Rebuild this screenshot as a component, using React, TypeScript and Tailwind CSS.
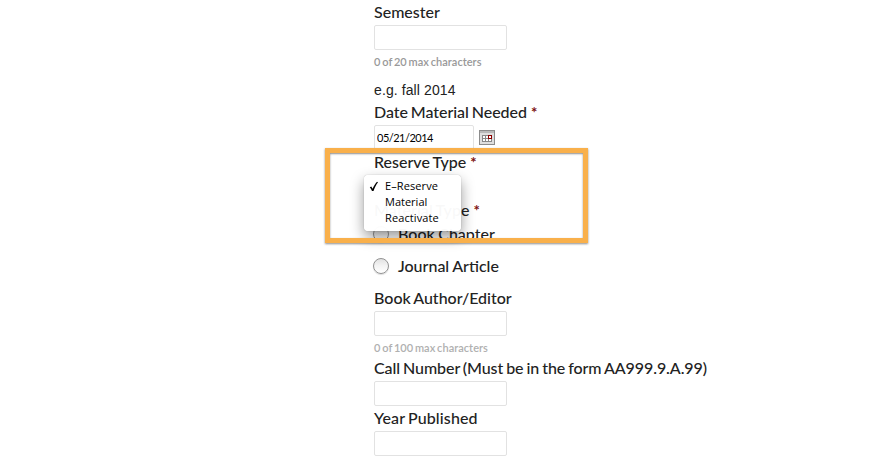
import type { ReactNode } from 'react';

function Label({ children, required = false, className = '' }: { children: ReactNode; required?: boolean; className?: string }) {
  return (
    <label className={`block h-[25px] whitespace-nowrap text-[16px] leading-[23px] font-medium [word-spacing:-1px] ${className}`}>
      {children}
      {required && <span className="ml-[4px] text-[15px] font-bold tracking-normal text-[#7d1010]">*</span>}
    </label>
  );
}

function TextBox() {
  return <input type="text" className="block h-[25px] w-[133px] rounded-[2px] border border-[#e2e2e2] bg-white px-1 outline-none" />;
}

function Hint({ children, className }: { children: ReactNode; className: string }) {
  return <div className={`whitespace-nowrap text-[11px] font-semibold tracking-[0.04px] [word-spacing:-1px] ${className}`}>{children}</div>;
}

function Radio({ label }: { label: string }) {
  return (
    <div className="flex h-8 items-center gap-[9px]">
      <span className="-ml-px h-4 w-4 rounded-full border border-[#929292] bg-linear-to-b from-[#e2e2e2] via-[#f4f4f4] to-white shadow-[0_1px_1px_#ddd]" />
      <span className="whitespace-nowrap text-[16px] font-medium [word-spacing:-0.5px]">{label}</span>
    </div>
  );
}

function CalendarIcon() {
  return (
    <svg width="16" height="16" viewBox="0 0 16 16" shapeRendering="crispEdges">
      <path d="M0 0h16v15H0z" fill="#8c8c8c" />
      <path d="M1 1h14v13H1z" fill="#dedede" />
      <path d="M1 1h14v2H1z" fill="#b8b8b8" />
      <path d="M3 5h10v7H3z" fill="#fff" />
      <path d="M3.5 5.5h9v6h-9zM6.5 5v7M9.5 5v7M3 8.5h10" fill="none" stroke="#888" />
      <path d="M9.5 5.5h3v3h-3z" fill="#fff" stroke="#8b0000" />
    </svg>
  );
}

const options = [
  { name: 'E–Reserve', tracking: 'tracking-[0.1px]' },
  { name: 'Material', tracking: '' },
  { name: 'Reactivate', tracking: 'tracking-[0.1px]' },
];

export default function App() {
  return (
    <main className="relative h-[459px] w-[878px] overflow-hidden bg-white pl-[374px] font-['Lato',sans-serif] text-[#222]">
      <Label>Semester</Label>
      <TextBox />
      <Hint className="h-[30px] leading-[24px] text-[#999]">0 of 20 max characters</Hint>
      <p className="h-5 font-['Liberation_Sans',sans-serif] text-[14px] leading-5 tracking-[0.1px]">e.g. fall 2014</p>
      <Label required className="tracking-[-0.05px]">Date Material Needed</Label>
      <div className="flex h-[25px] gap-[5px]">
        <input
          type="text"
          defaultValue="05/21/2014"
          className="h-[25px] w-[100px] rounded-[2px] border border-[#e2e2e2] px-[2px] text-[11px] tracking-[-0.5px] text-black outline-none"
        />
        <span className="pt-[5px]"><CalendarIcon /></span>
      </div>
      <Label required>Reserve Type</Label>
      <div className="h-[23px]" />
      <Label required className="tracking-[0.05px]">Material Type</Label>
      <div className="-mt-[5px]">
        <Radio label="Book Chapter" />
        <Radio label="Journal Article" />
      </div>
      <div className="pt-1">
        <Label>Book Author/Editor</Label>
      </div>
      <TextBox />
      <Hint className="h-5 leading-[24px] text-[#b0b0b0]">0 of 100 max characters</Hint>
      <Label className="tracking-[-0.07px]">Call Number (Must be in the form AA999.9.A.99)</Label>
      <TextBox />
      <Label className="tracking-[0.12px]">Year Published</Label>
      <TextBox />

      <ul className="absolute left-[364px] top-[175px] h-[56px] w-[97px] rounded-[4px] bg-white/97 py-[3px] font-['Open_Sans',sans-serif] text-[11px] font-medium text-black shadow-[0_6px_14px_rgba(0,0,0,.4),0_0_1px_rgba(0,0,0,.4)]">
        {options.map((option, i) => (
          <li key={option.name} className="flex h-4 items-center">
            <span className="w-[21px] pl-[5px]">
              {i === 0 && (
                <svg width="10" height="11" viewBox="0 0 10 11" fill="#000">
                  <path d="M.8 6.3L2.3 5.6 3.6 7.8C4.8 5 6.2 2.7 8 .8L9 1.2C7 4 5.6 6.7 4.5 10H3C2.4 8.5 1.7 7.3.8 6.3Z" />
                </svg>
              )}
            </span>
            <span className={`whitespace-nowrap ${option.tracking}`}>{option.name}</span>
          </li>
        ))}
      </ul>

      <div className="pointer-events-none absolute left-[325px] top-[148px] h-[95px] w-[263px] border-[5px] border-[#f9b04b] shadow-[0_1px_2px_rgba(0,0,0,.45),inset_0_1px_2px_rgba(0,0,0,.45)]" />
    </main>
  );
}
